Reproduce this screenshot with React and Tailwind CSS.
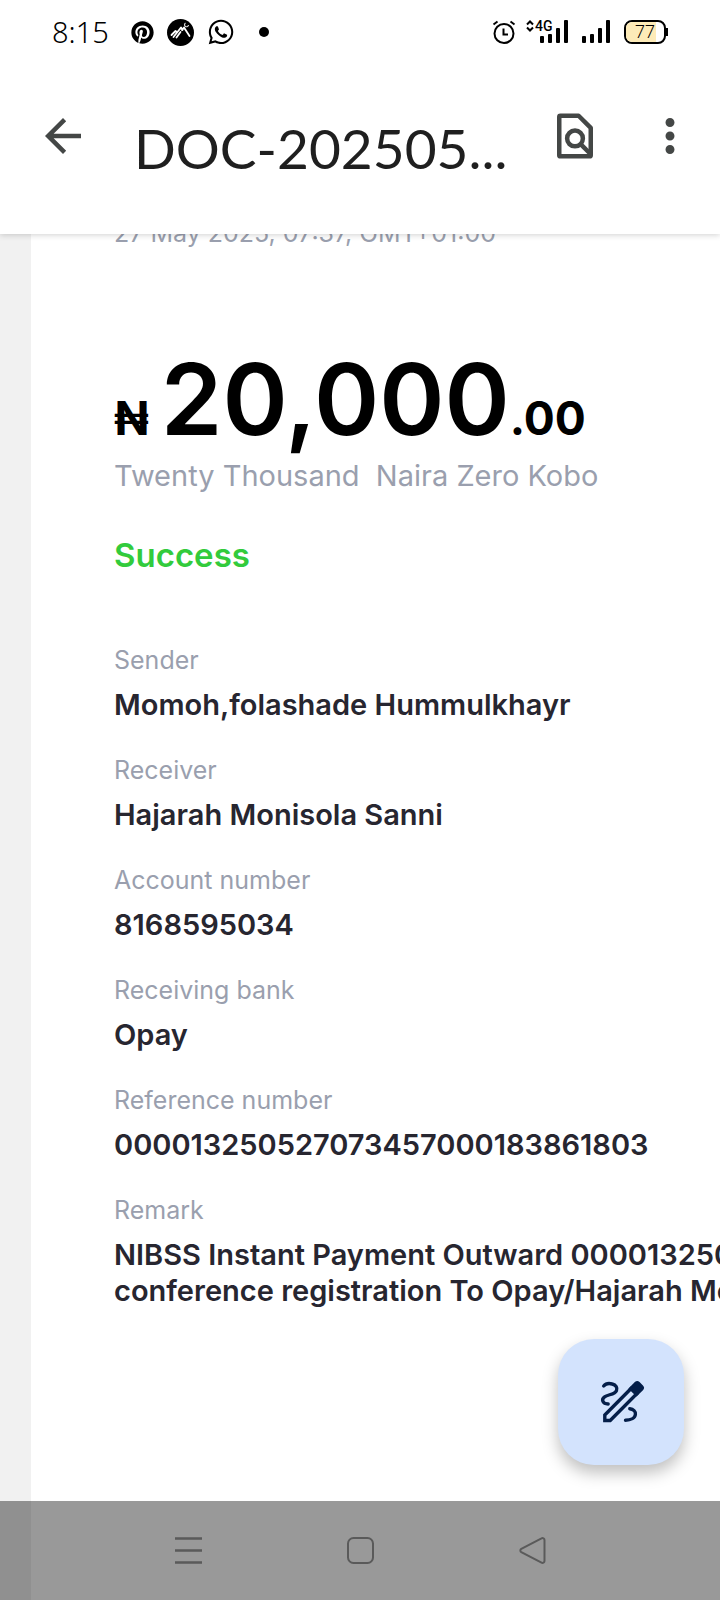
import React from 'react';
import { FaPinterest, FaWhatsapp } from 'react-icons/fa';
import { MdArrowBack, MdMoreVert } from 'react-icons/md';

const details = [
  { label: 'Sender', value: 'Momoh,folashade Hummulkhayr' },
  { label: 'Receiver', value: 'Hajarah Monisola Sanni' },
  { label: 'Account number', value: '8168595034' },
  { label: 'Receiving bank', value: 'Opay' },
  { label: 'Reference number', value: '000013250527073457000183861803' },
];

const MountainIcon = () => (
  <svg width="27" height="27" viewBox="0 0 27 27" fill="none">
    <circle cx="13.5" cy="13.5" r="13.5" fill="#000" />
    <path d="M4.500 16 8.500 12l1.500 1M6.500 18 14 8.500l1.500 2.500M9.500 18.500l4-5.500M15 11l2-2.500 5.500 8.500" stroke="#fff" strokeWidth="1.800" strokeLinecap="round" strokeLinejoin="round" />
    <path d="M18.500 4a2 2 0 1 0 3 2" stroke="#ddd" strokeWidth="1.200" />
  </svg>
);

const AlarmIcon = () => (
  <svg width="24" height="24" viewBox="0 0 24 24" fill="none" stroke="#000" strokeWidth="2">
    <circle cx="12" cy="13.5" r="9.5" />
    <path d="M11.5 8.5V14.5H16M1.5 4.5 5.5 1.5M18.5 1.5l4 3" />
  </svg>
);

const SignalBars = () => (
  <svg width="29" height="24" viewBox="0 0 29 24" fill="#000">
    <rect x="0" y="16" width="4" height="7" rx="1" />
    <rect x="8" y="14" width="4" height="9" rx="1" />
    <rect x="16" y="8" width="4" height="15" rx="1" />
    <rect x="24" y="0" width="4" height="23" rx="1" />
  </svg>
);

const FindInPageIcon = () => (
  <svg width="54" height="54" viewBox="0 0 24 24" fill="none" stroke="#444746" strokeWidth="2">
    <path d="M5.5 3h8.1L19 8.4v12.1a.5.5 0 0 1-.5.5h-13a.5.5 0 0 1-.5-.5v-17a.5.5 0 0 1 .5-.5z" strokeLinejoin="round" />
    <circle cx="12" cy="13.1" r="3.5" />
    <path d="m14.400 15.500 4.600 4.600" />
  </svg>
);

const DrawIcon = () => (
  <svg width="54" height="54" viewBox="0 0 24 24" fill="none" stroke="#041e49" strokeWidth="1.5" strokeLinecap="round">
    <path d="M4.3 4.9C5.2 3.8 7 3.700 8.100 4c1.700.4 2.400 1.700 1.900 2.900C9.300 8.700 6.200 8.600 4.700 9.700c-1.600 1.200-.9 3.100 1.600 3.200" />
    <path d="M15.900 15c1.600.2 2.700 1.200 2.500 2.500-.2 1.600-2 2.600-4.400 2.600" />
    <path d="M4.800 20.200v-2.400L16.500 6l2.400 2.400L7.200 20.200z" strokeLinecap="butt" />
    <path d="M16 6 18.500 3.500a1 1 0 0 1 1.400 0l1.500 1.500a1 1 0 0 1 0 1.400L18.900 8.900z" fill="#041e49" strokeWidth="1" />
  </svg>
);

const StatusBar = () => (
  <div className="flex h-16 items-center justify-between px-[52px] font-['Noto_Sans',sans-serif] text-black">
    <div className="flex items-center">
      <span className="text-[29px] leading-8 font-light">8:15</span>
      <div className="ml-[22px] flex items-center gap-[13px]">
        <FaPinterest size={23} />
        <MountainIcon />
        <FaWhatsapp size={28} />
      </div>
      <span className="ml-6 h-[10px] w-[10px] rounded-full bg-black"></span>
    </div>
    <div className="flex items-center">
      <AlarmIcon />
      <div className="relative ml-6">
        <SignalBars />
        <span className="absolute -top-px -left-[14px] flex items-center font-['Roboto',sans-serif] text-sm leading-[14px] font-medium">
          <svg width="8" height="12" viewBox="0 0 8 12" fill="none" stroke="#000" strokeWidth="2" className="mr-px">
            <path d="M1 4.500 4 1.500l3 3M1 7.500l3 3 3-3" />
          </svg>
          4G
        </span>
      </div>
      <div className="ml-[13px]">
        <SignalBars />
      </div>
      <div className="ml-[13px] flex items-center">
        <div className="relative flex h-6 w-[42px] items-center overflow-hidden rounded-lg border-2 border-black pl-[9px]">
          <div className="absolute inset-y-0 left-0 w-[30px] bg-[#fdebb8]"></div>
          <span className="relative font-['Roboto',sans-serif] text-lg leading-5 font-light">77</span>
        </div>
        <span className="h-2 w-[2px] bg-black"></span>
      </div>
    </div>
  </div>
);

const DetailRow = ({ label, children }) => (
  <div>
    <dt className="text-[25px] leading-[30px] text-[#9a9fae]">{label}</dt>
    <dd className="mt-3 text-[29px] leading-9 font-semibold whitespace-nowrap text-[#272630]">{children}</dd>
  </div>
);

const App = () => {
  return (
    <div className="relative flex min-h-screen flex-col overflow-hidden bg-[#f1f1f1] font-['Inter',sans-serif]">
      <div className="relative z-10 bg-white shadow-[0_1px_6px_rgba(0,0,0,0.18)]">
        <StatusBar />
        <header className="flex items-start pt-[45px] pr-[23px] pb-[47px] pl-9 text-[#444746]">
          <button aria-label="Back"><MdArrowBack size={54} /></button>
          <h1 className="ml-11 min-w-0 flex-1 font-['Lato',sans-serif] text-[55px] leading-[78px] whitespace-nowrap text-[#1f1f1f]">DOC-202505...</h1>
          <button aria-label="Find in page"><FindInPageIcon /></button>
          <button aria-label="More options" className="ml-[41px]"><MdMoreVert size={54} /></button>
        </header>
      </div>

      {/* Document page */}
      <main className="-mt-4 ml-[31px] flex-1 overflow-hidden bg-white pb-40 pl-[83px]">
        <p className="text-[25px] leading-[30px] text-[#9a9fae]">27 May 2025, 07:37, GMT+01:00</p>

        <p className="mt-28 flex items-baseline leading-[79px] font-semibold text-black">
          <span className="text-[46px] font-bold">₦</span>
          <span className="ml-3 text-[99px]">20,000</span>
          <span className="text-[46px] font-bold">.00</span>
        </p>
        <p className="text-[29px] leading-9 whitespace-pre text-[#9a9fae]">Twenty Thousand  Naira Zero Kobo</p>
        <p className="mt-[41px] text-[33px] leading-10 font-semibold text-[#32cb3c]">Success</p>

        <dl className="mt-[70px] space-y-8">
          {details.map((item) => (
            <DetailRow key={item.label} label={item.label}>{item.value}</DetailRow>
          ))}
          <DetailRow label="Remark">
            NIBSS Instant Payment Outward 000013250527073457
            <br />
            conference registration To Opay/Hajarah Monisola Sanni
          </DetailRow>
        </dl>
      </main>

      <button aria-label="Annotate" className="absolute right-9 bottom-[135px] flex h-[126px] w-[126px] items-center justify-center rounded-[36px] bg-[#d3e3fd] shadow-[0_8px_16px_rgba(0,0,0,0.25)]">
        <DrawIcon />
      </button>

      {/* System navigation */}
      <nav className="absolute inset-x-0 bottom-0 flex h-[99px] items-center bg-black/40 px-[102px]">
        <button aria-label="Recent apps" className="flex flex-1 justify-center">
          <svg width="27" height="27" viewBox="0 0 27 27" stroke="#5a5a5a" strokeWidth="2.400">
            <path d="M0 1.500h27M0 13.500h27M0 25.500h27" />
          </svg>
        </button>
        <button aria-label="Home" className="flex flex-1 justify-center">
          <svg width="27" height="27" viewBox="0 0 27 27" fill="none" stroke="#5a5a5a" strokeWidth="2">
            <rect x="1" y="1" width="25" height="25" rx="5.500" />
          </svg>
        </button>
        <button aria-label="Back navigation" className="flex flex-1 justify-center">
          <svg width="27" height="27" viewBox="0 0 27 27" fill="none" stroke="#5a5a5a" strokeWidth="2">
            <path d="M2.300 11.800 22.500 1.300a2 2 0 0 1 3 1.700v21a2 2 0 0 1-3 1.700L2.300 15.200a2 2 0 0 1 0-3.400z" />
          </svg>
        </button>
      </nav>
    </div>
  );
};

export default App;
